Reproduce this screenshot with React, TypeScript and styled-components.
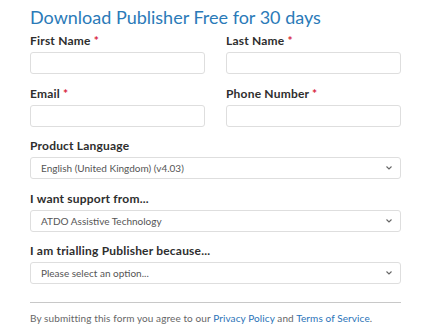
import styled, { createGlobalStyle } from 'styled-components';

const GlobalStyle = createGlobalStyle`
    html, body {
        margin: 0;
        padding: 0;
        background: #ffffff;
    }
    body {
        font-family: Lato, 'Noto Sans', sans-serif;
    }
`;

const App = () => {
    return (
        <>
            <GlobalStyle />
            <Page>
                <Title>Download Publisher Free for 30 days</Title>
                <Form>
                    <Row>
                        <Field>
                            <Label>
                                First Name <Required>*</Required>
                            </Label>
                            <TextInput type="text" />
                        </Field>
                        <Field>
                            <Label>
                                Last Name <Required>*</Required>
                            </Label>
                            <TextInput type="text" />
                        </Field>
                    </Row>
                    <Row>
                        <Field>
                            <Label>
                                Email <Required>*</Required>
                            </Label>
                            <TextInput type="email" />
                        </Field>
                        <Field>
                            <Label>
                                Phone Number <Required>*</Required>
                            </Label>
                            <TextInput type="tel" />
                        </Field>
                    </Row>
                    <Field>
                        <Label>Product Language</Label>
                        <SelectBox value="English (United Kingdom) (v4.03)" />
                    </Field>
                    <Field>
                        <Label>I want support from...</Label>
                        <SelectBox value="ATDO Assistive Technology" />
                    </Field>
                    <Field>
                        <Label>I am trialling Publisher because...</Label>
                        <SelectBox value="Please select an option..." />
                    </Field>
                </Form>
                <Divider />
                <Footer>
                    By submitting this form you agree to our <Link href="#">Privacy Policy</Link> and{' '}
                    <Link href="#">Terms of Service</Link>.
                </Footer>
            </Page>
        </>
    );
};

const SelectBox = ({ value }: { value: string }) => (
    <Select>
        <SelectText>{value}</SelectText>
        <Chevron width="8" height="6" viewBox="0 0 8 6">
            <path d="M1.5 1.5 L4 4 L6.5 1.5" fill="none" stroke="#666" strokeWidth="1.1" />
        </Chevron>
    </Select>
);

export default App;

const Page = styled.div`
    width: 371px;
    padding: 5px 20px 0 30px;
    display: flex;
    flex-direction: column;
`;
const Title = styled.h1`
    margin: 0 0 4px 0;
    font-size: 18px;
    font-weight: 400;
    line-height: 24px;
    color: #2a7ab8;
`;
const Form = styled.div`
    display: flex;
    flex-direction: column;
    gap: 11.5px;
`;
const Row = styled.div`
    display: grid;
    grid-template-columns: 175px 175px;
    column-gap: 21px;
`;
const Field = styled.div`
    display: flex;
    flex-direction: column;
    gap: 3px;
`;
const Label = styled.label`
    font-size: 12px;
    font-weight: 700;
    line-height: 16px;
    letter-spacing: 0.2px;
    color: #2e2e2e;
`;
const Required = styled.span`
    color: #d8233c;
`;
const TextInput = styled.input`
    box-sizing: border-box;
    height: 22px;
    width: 100%;
    margin: 0;
    border: 1px solid #dedede;
    border-radius: 3px;
    background: #ffffff;
    outline: none;
`;
const Select = styled.div`
    box-sizing: border-box;
    height: 22px;
    display: flex;
    align-items: center;
    justify-content: space-between;
    padding: 0 7px 0 10px;
    border: 1px solid #dedede;
    border-radius: 3px;
    background: #ffffff;
`;
const SelectText = styled.span`
    font-size: 10px;
    color: #555555;
`;
const Chevron = styled.svg`
    display: block;
`;
const Divider = styled.hr`
    margin: 18px 0 8px 0;
    border: none;
    border-top: 1px solid #c8c8c8;
`;
const Footer = styled.p`
    margin: 0;
    font-size: 10px;
    letter-spacing: 0.1px;
    line-height: 14px;
    color: #666666;
`;
const Link = styled.a`
    color: #2a73b8;
    text-decoration: none;
`;
